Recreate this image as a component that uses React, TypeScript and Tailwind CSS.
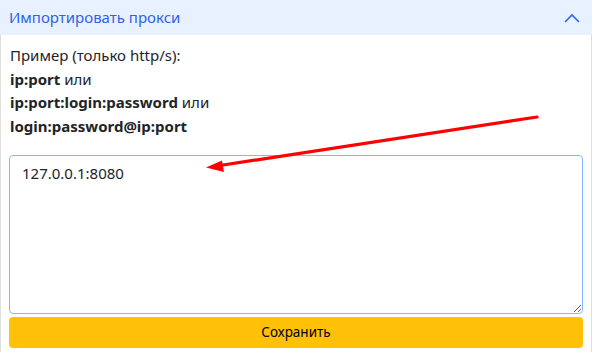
import React from "react";

export default function App() {
  return (
    <div
      className="relative w-[592px] h-[352px] bg-white overflow-hidden"
      style={{ fontFamily: '"Noto Sans", "Open Sans", sans-serif' }}
    >
      <div className="flex flex-col h-full border-l border-r border-[#dedede]">
        <div className="flex items-center justify-between h-[35px] bg-[#e7f1ff] pl-[9px] pr-[10px] -ml-px -mr-px">
          <span className="text-[15px] text-[#2f62e8] leading-none">Импортировать прокси</span>
          <svg width="18" height="12" viewBox="0 0 18 12" className="mr-[1px]">
            <path d="M2 10 L9 3 L16 10" fill="none" stroke="#2f6ae0" strokeWidth="1.6" />
          </svg>
        </div>
        <div className="px-2 pt-[9px] flex flex-col">
          <div className="pl-[1px] text-[15px] leading-[23.7px] text-[#212529]">
            <div>Пример (только http/s):</div>
            <div><b>ip:port</b> или</div>
            <div><b>ip:port:login:password</b> или</div>
            <div><b>login:password@ip:port</b></div>
          </div>
          <textarea
            defaultValue="127.0.0.1:8080"
            className="mt-[16px] h-[159px] w-full rounded-[4px] border border-[#86b7fe] px-3 pt-[5px] pb-2 text-[15px] leading-[24px] text-[#212529] outline-none"
            style={{ fontFamily: '"Noto Sans", "Open Sans", sans-serif' }}
          />
          <button className="mt-[3px] h-[31px] w-full rounded-[4px] bg-[#ffc107] text-[13.5px] text-black leading-none">
            Сохранить
          </button>
        </div>
      </div>
      <svg
        className="absolute left-0 top-0 pointer-events-none"
        width="592"
        height="352"
        viewBox="0 0 592 352"
      >
        <line x1="537" y1="117" x2="220" y2="165.5" stroke="#ff0000" strokeWidth="3.2" strokeLinecap="round" />
        <polygon points="206,167.5 222,160.5 224,172" fill="#ff0000" />
      </svg>
    </div>
  );
}
